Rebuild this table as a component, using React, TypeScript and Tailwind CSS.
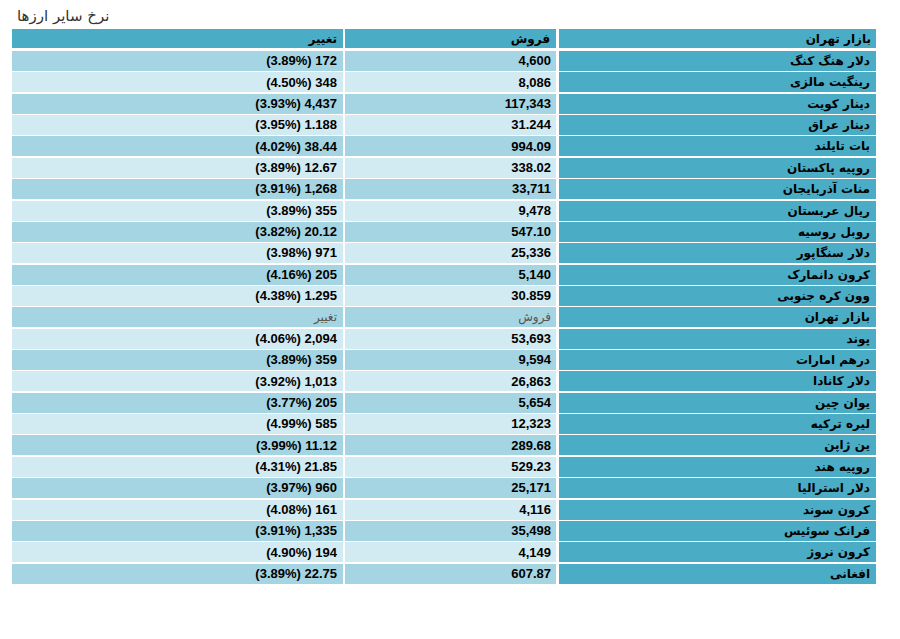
import React from "react";

type Row = { name: string; sell: string; change: string; sub?: boolean };

const ROWS: Row[] = [
  { name: "دلار هنگ کنگ", sell: "4,600", change: "(3.89%) 172" },
  { name: "رینگیت مالزی", sell: "8,086", change: "(4.50%) 348" },
  { name: "دینار کویت", sell: "117,343", change: "(3.93%) 4,437" },
  { name: "دینار عراق", sell: "31.244", change: "(3.95%) 1.188" },
  { name: "بات تایلند", sell: "994.09", change: "(4.02%) 38.44" },
  { name: "روپیه پاکستان", sell: "338.02", change: "(3.89%) 12.67" },
  { name: "منات آذربایجان", sell: "33,711", change: "(3.91%) 1,268" },
  { name: "ریال عربستان", sell: "9,478", change: "(3.89%) 355" },
  { name: "روبل روسیه", sell: "547.10", change: "(3.82%) 20.12" },
  { name: "دلار سنگاپور", sell: "25,336", change: "(3.98%) 971" },
  { name: "کرون دانمارک", sell: "5,140", change: "(4.16%) 205" },
  { name: "وون کره جنوبی", sell: "30.859", change: "(4.38%) 1.295" },
  { name: "بازار تهران", sell: "فروش", change: "تغییر", sub: true },
  { name: "پوند", sell: "53,693", change: "(4.06%) 2,094" },
  { name: "درهم امارات", sell: "9,594", change: "(3.89%) 359" },
  { name: "دلار کانادا", sell: "26,863", change: "(3.92%) 1,013" },
  { name: "یوان چین", sell: "5,654", change: "(3.77%) 205" },
  { name: "لیره ترکیه", sell: "12,323", change: "(4.99%) 585" },
  { name: "ین ژاپن", sell: "289.68", change: "(3.99%) 11.12" },
  { name: "روپیه هند", sell: "529.23", change: "(4.31%) 21.85" },
  { name: "دلار استرالیا", sell: "25,171", change: "(3.97%) 960" },
  { name: "کرون سوند", sell: "4,116", change: "(4.08%) 161" },
  { name: "فرانک سوئیس", sell: "35,498", change: "(3.91%) 1,335" },
  { name: "کرون نروژ", sell: "4,149", change: "(4.90%) 194" },
  { name: "افغانی", sell: "607.87", change: "(3.89%) 22.75" },
];

const fa = "font-['DejaVu_Sans',sans-serif]";
const num = "font-['Liberation_Sans','DejaVu_Sans',sans-serif]";

export default function App() {
  return (
    <div className="w-[900px] h-[639px] bg-white pl-[12px]">
      <div className={`h-[29px] pl-[5px] pt-[5px] text-[15px] text-[#333] ${fa}`}>نرخ سایر ارزها</div>

      {/* header */}
      <div className="flex h-[19px] text-[12px] font-bold text-black">
        <div className={`w-[331px] bg-[#4bacc6] flex items-center justify-end pr-[6px] ${fa}`}>تغییر</div>
        <div className={`ml-[2px] w-[211px] bg-[#4bacc6] flex items-center justify-end pr-[6px] ${fa}`}>فروش</div>
        <div className={`ml-[3px] w-[317px] bg-[#4bacc6] flex items-center justify-end pr-[5px] ${fa}`}>بازار تهران</div>
      </div>

      <div className="mt-[3px] flex flex-col gap-[1.36px]">
        {ROWS.map((r, i) => {
          const bg = i % 2 === 0 ? "bg-[#a5d5e2]" : "bg-[#d2eaf1]";
          return (
            <div key={i} className="flex h-[20px] text-black">
              <div
                className={`w-[331px] ${bg} flex items-center justify-end pr-[6px] ${
                  r.sub ? `${fa} text-[12px] text-[#555]` : `${num} text-[13px] font-bold`
                }`}
              >
                {r.change}
              </div>
              <div
                className={`ml-[2px] w-[211px] ${bg} flex items-center justify-end pr-[5px] ${
                  r.sub ? `${fa} text-[12px] text-[#555]` : `${num} text-[13px] font-bold`
                }`}
              >
                {r.sell}
              </div>
              <div className={`ml-[3px] w-[317px] bg-[#4bacc6] flex items-center justify-end pr-[6px] text-[12px] font-bold ${fa}`}>
                {r.name}
              </div>
            </div>
          );
        })}
      </div>
    </div>
  );
}
